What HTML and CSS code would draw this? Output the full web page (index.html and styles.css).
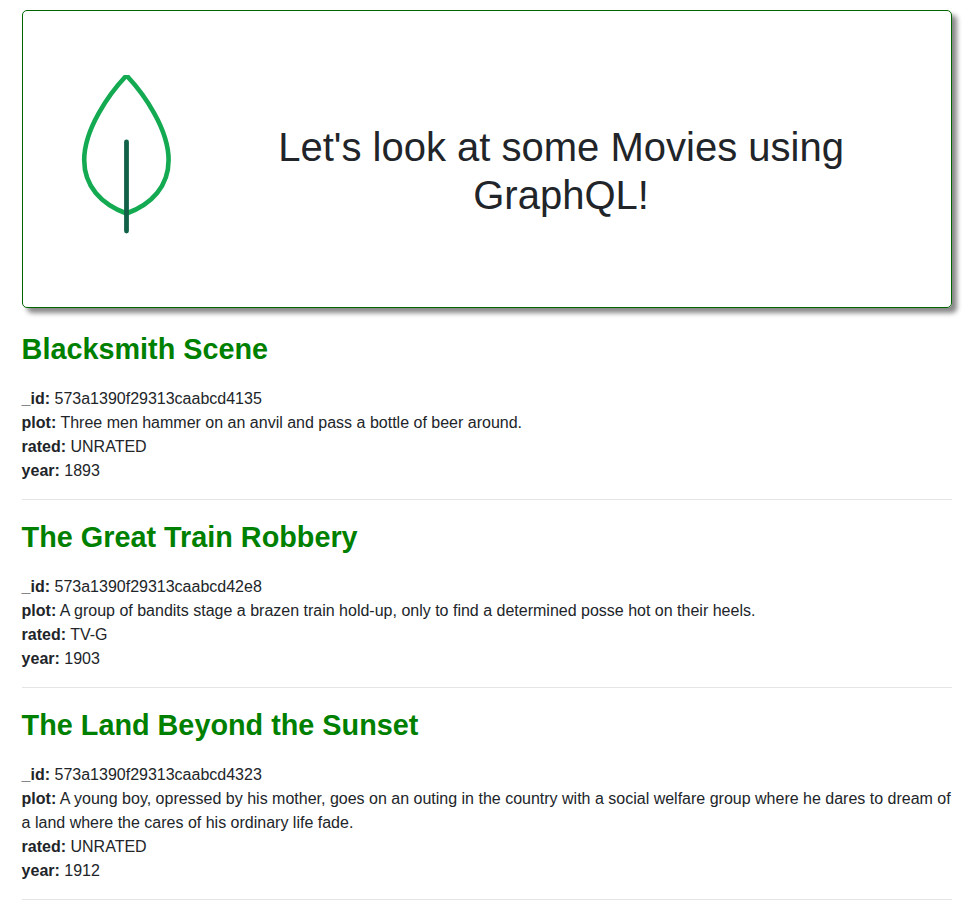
FILE: index.html
```html
<!DOCTYPE html>
<html lang="en">
<head>
<meta charset="utf-8">
<title>Movies</title>
<link rel="stylesheet" href="styles.css">
</head>
<body>
<main class="container">
  <header class="banner">
    <svg class="leaf" viewBox="0 0 100 160" width="100" height="160" fill="none" aria-hidden="true">
      <path d="M50.5 .5C33 19 8.200 54 8.200 85C8.200 111 25 129 50.500 138.500C76 129 92.600 111 92.600 85C92.600 54 68 19 50.500 .5Z" stroke="#13aa52" stroke-width="4.600"/>
      <path d="M50.500 67V156" stroke="#116149" stroke-width="4.800" stroke-linecap="round"/>
    </svg>
    <h1 class="title">Let's look at some Movies using GraphQL!</h1>
  </header>

  <article class="movie">
    <h2>Blacksmith Scene</h2>
    <div><b>_id:</b> 573a1390f29313caabcd4135</div>
    <div><b>plot:</b> Three men hammer on an anvil and pass a bottle of beer around.</div>
    <div><b>rated:</b> UNRATED</div>
    <div><b>year:</b> 1893</div>
  </article>
  <article class="movie">
    <h2>The Great Train Robbery</h2>
    <div><b>_id:</b> 573a1390f29313caabcd42e8</div>
    <div><b>plot:</b> A group of bandits stage a brazen train hold-up, only to find a determined posse hot on their heels.</div>
    <div><b>rated:</b> TV-G</div>
    <div><b>year:</b> 1903</div>
  </article>
  <article class="movie">
    <h2>The Land Beyond the Sunset</h2>
    <div><b>_id:</b> 573a1390f29313caabcd4323</div>
    <div><b>plot:</b> A young boy, opressed by his mother, goes on an outing in the country with a social welfare group where he dares to dream of a land where the cares of his ordinary life fade.</div>
    <div><b>rated:</b> UNRATED</div>
    <div><b>year:</b> 1912</div>
  </article>
</main>
</body>
</html>
```
FILE: styles.css
```css
* { box-sizing: border-box; }
body {
  margin: 0;
  overflow: hidden;
  background: #fff;
  color: #212529;
  font: 16px/24px "Liberation Sans", Arial, sans-serif;
}
.container { padding: 10px 22px 0 21.600px; }
.banner {
  display: flex;
  align-items: flex-start;
  height: 298px;
  padding: 64px 54.500px 0 53px;
  border: 1px solid #006400;
  border-radius: 5px;
  box-shadow: 5px 5px 5px #888;
}
.leaf { flex: none; }
.title {
  flex: 1;
  margin: 48px 0 0 50px;
  font-size: 40px;
  font-weight: 400;
  line-height: 48px;
  text-align: center;
}
.banner + .movie { margin-top: 20px; }
.movie {
  padding-bottom: 16px;
  margin-bottom: 16px;
  border-bottom: 1px solid #e5e5e5;
}
.movie h2 {
  height: 59px;
  margin: 0;
  padding-top: 4px;
  color: #008000;
  font-size: 28.800px;
  font-weight: 700;
  line-height: 34.560px;
}
```
